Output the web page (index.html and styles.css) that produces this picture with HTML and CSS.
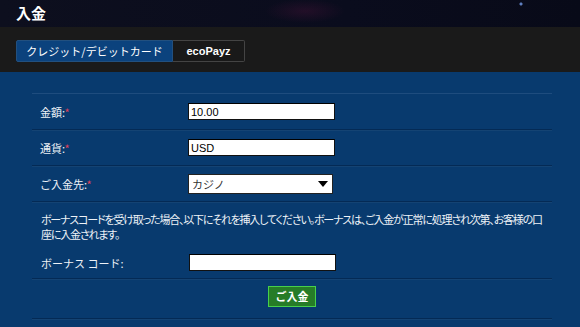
FILE: index.html
```html
<!DOCTYPE html>
<html lang="ja">
<head>
    <meta charset="UTF-8">
    <title>入金</title>
    <link rel="stylesheet" href="styles.css">
</head>
<body>
<div id="page">
    <div id="head">
        <h1>入金</h1>
    </div>
    <div id="tabs">
        <ul id="tab_top">
            <li class="tab-item selected">クレジット/デビットカード</li>
            <li class="tab-item">ecoPayz</li>
        </ul>
    </div>
    <div id="deposit">
        <form class="deposit-form">
            <div class="row">
                <label class="row-label">金額:<span class="req">*</span></label>
                <input class="field" type="text" value="10.00">
            </div>
            <div class="row">
                <label class="row-label">通貨:<span class="req">*</span></label>
                <input class="field" type="text" value="USD">
            </div>
            <div class="row">
                <label class="row-label">ご入金先:<span class="req">*</span></label>
                <div class="select">
                    <span>カジノ</span>
                    <i class="arrow"></i>
                </div>
            </div>
            <div class="bonus">
                <p class="note">ボーナスコードを受け取った場合、以下にそれを挿入してください。ボーナスは、ご入金が正常に処理され次第、お客様の口座に入金されます。</p>
                <div class="bonus-row">
                    <label class="row-label">ボーナス コード:</label>
                    <input class="field" type="text" value="">
                </div>
            </div>
            <div class="submit-row">
                <button class="btn-submit" type="button">ご入金</button>
            </div>
        </form>
    </div>
</div>
</body>
</html>
```
FILE: styles.css
```css
*{
    margin: 0;
    padding: 0;
    box-sizing: border-box;
}
body{
    width: 580px;
    height: 327px;
    overflow: hidden;
    background-color: #083a6e;
    font-family: "Noto Sans CJK JP", "Liberation Sans", sans-serif;
    font-size: 11px;
    color: #eef2f7;
}
#head{
    height: 27px;
    padding-left: 16px;
    background: radial-gradient(circle at 521px 4px, #5f7fc0 0, #5f7fc0 1px, transparent 2px),
                radial-gradient(ellipse 40px 12px at 305px 11px, rgba(80, 20, 60, .35), transparent),
                linear-gradient(90deg, #0d0f1e, #0a0c1d 60%, #080a18);
}
#head h1{
    font-size: 15px;
    line-height: 26px;
    font-weight: bold;
    color: #fff;
}
#tabs{
    height: 45px;
    padding: 13px 16px 0;
    background-color: #1a1a1a;
}
#tab_top{
    list-style: none;
    display: flex;
    height: 22px;
}
#tab_top>li{
    height: 100%;
    line-height: 20px;
    text-align: center;
    font-size: 11px;
    color: #fff;
    border: 1px solid #444;
    background-color: #191919;
    font-family: "Liberation Sans", "Noto Sans CJK JP", sans-serif;
    font-weight: bold;
}
#tab_top>li:first-child{
    width: 157px;
    border-radius: 2px 0 0 2px;
    font-family: "Noto Sans CJK JP", sans-serif;
    font-weight: normal;
}
#tab_top>li:last-child{
    width: 72px;
    border-left: none;
    border-radius: 0 2px 2px 0;
}
#tab_top>li.selected{
    background-color: #0b427d;
    border-color: #22507f;
}
#deposit{
    padding: 21px 28px 0 32px;
}
.deposit-form{
    border-top: 1px solid #1e4c7e;
}
.row, .bonus, .submit-row{
    border-bottom: 1px solid #042a55;
    box-shadow: 0 1px 0 #144373;
}
.row{
    display: flex;
    align-items: center;
    height: 36px;
    padding-left: 8px;
}
.row-label{
    width: 148px;
    flex-shrink: 0;
}
.req{
    color: #e0405a;
}
.field{
    width: 147px;
    height: 17px;
    border: 1px solid #111;
    border-top-color: #000;
    padding: 0 2px;
    background: #fff;
    font-family: "Liberation Sans", sans-serif;
    font-size: 11px;
    color: #000;
}
.select{
    display: flex;
    justify-content: space-between;
    align-items: center;
    width: 145px;
    height: 20px;
    padding: 0 4px 0 3px;
    border: 1px solid #222;
    background: #fff;
    color: #333;
}
.arrow{
    width: 0;
    height: 0;
    border-left: 5px solid transparent;
    border-right: 5px solid transparent;
    border-top: 6px solid #000;
}
.bonus{
    padding: 10px 0 0 9px;
    height: 77px;
}
.note{
    width: 507px;
    line-height: 15px;
    letter-spacing: -1.2px;
    font-feature-settings: "palt";
}
.bonus-row{
    display: flex;
    align-items: center;
    margin-top: 12px;
}
.submit-row{
    display: flex;
    justify-content: center;
    height: 40px;
    padding-top: 7px;
}
.btn-submit{
    width: 48px;
    height: 21px;
    background-color: #267c27;
    border: 1px solid #47d04a;
    color: #fff;
    font-family: "Noto Sans CJK JP", sans-serif;
    font-size: 11px;
    line-height: 17px;
    font-weight: bold;
}
```
